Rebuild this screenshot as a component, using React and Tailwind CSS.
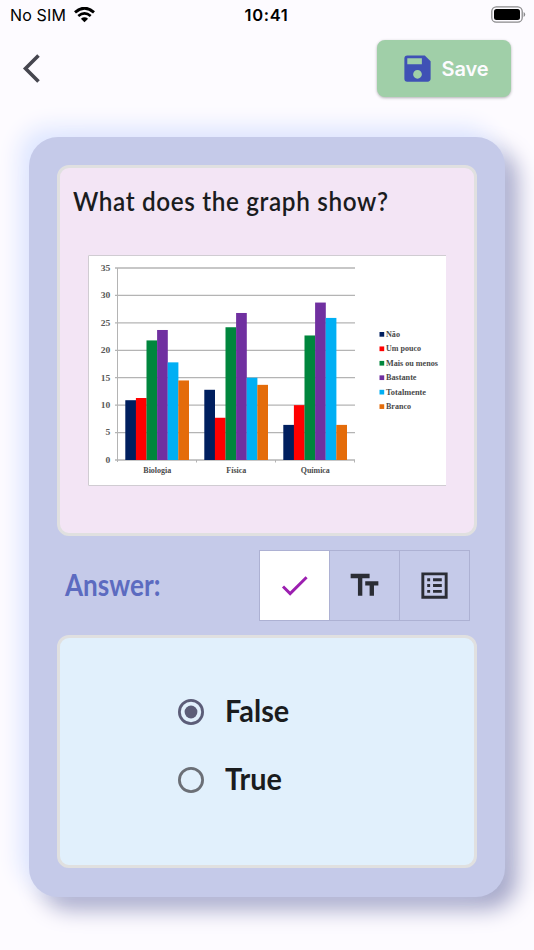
import React, { useState } from "react";
import { MdCheck, MdSave, MdTextFields } from "react-icons/md";

const SERIES = [
  { name: "Não", color: "#001f5f", values: [10.9, 12.8, 6.4], width: 14 },
  { name: "Um pouco", color: "#ff0000", values: [11.3, 7.7, 10], width: 35 },
  { name: "Mais ou menos", color: "#00863d", values: [21.8, 24.2, 22.7], width: 52 },
  { name: "Bastante", color: "#7030a0", values: [23.7, 26.8, 28.7], width: 30.5 },
  { name: "Totalmente", color: "#00aff4", values: [17.8, 15, 25.9], width: 40 },
  { name: "Branco", color: "#e46c0a", values: [14.5, 13.7, 6.4], width: 25 },
];

const SUBJECTS = [
  { name: "Biologia", width: 28 },
  { name: "Física", width: 20 },
  { name: "Química", width: 29 },
];

const BASE = 205;
const UNIT = 192 / 35;

const StatusBar = () => (
  <header className="grid h-[30px] grid-cols-3 items-center pr-2 pl-2.5 font-['Inter',sans-serif] text-black">
    <div className="flex items-center gap-2">
      <span className="text-[16px] tracking-[0.15px] whitespace-nowrap">No SIM</span>
      <svg width="21" height="16" viewBox="0 0 21 16" fill="none" stroke="black">
        <path d="M1 5.3Q10.5-2.9 20 5.3" strokeWidth="2.9" />
        <path d="M4.3 9Q10.5 3.7 16.7 9" strokeWidth="2.7" />
        <path d="M10.5 15.3 6.9 11.8Q10.5 8.9 14.1 11.8Z" fill="black" stroke="none" />
      </svg>
    </div>
    <span className="pr-[3px] text-center text-[16.5px] font-semibold tracking-[0.7px]">10:41</span>
    <svg className="-mt-0.5 justify-self-end" width="35" height="17" viewBox="0 0 35 17">
      <rect x="0.8" y="0.8" width="30.4" height="15.4" rx="4.5" fill="none" stroke="#8a8a8c" strokeWidth="1.3" />
      <rect x="3" y="3" width="26" height="11" rx="2.5" fill="black" />
      <path d="M32.6 6v5q1.6-.8 1.6-2.5T32.6 6Z" fill="#8a8a8c" />
    </svg>
  </header>
);

const Chart = () => (
  <svg
    width="358"
    height="231"
    viewBox="0 0 358 231"
    className="mx-auto bg-white font-['Liberation_Serif',serif] font-bold"
  >
    <path d="M358 .5H.5v230H358" fill="none" stroke="#d0ccd2" />
    {[0, 5, 10, 15, 20, 25, 30, 35].map((tick) => {
      const y = BASE - tick * UNIT;
      return (
        <g key={tick}>
          <path d={`M27 ${y}H267`} stroke="#b4b4b4" strokeWidth="1.3" />
          <text
            x={tick > 9 ? 12.8 : 17.6}
            y={y + 2.8}
            fontSize="8"
            textLength={tick > 9 ? 9.6 : 4.8}
            lengthAdjust="spacingAndGlyphs"
            fill="#5a5a5a"
          >
            {tick}
          </text>
        </g>
      );
    })}
    <path d="M29.5 13V207M108.5 205v2.5M187.5 205v2.5M266.5 205v2.5" stroke="#b4b4b4" />
    {SUBJECTS.map((subject, i) => (
      <g key={subject.name}>
        {SERIES.map((s, j) => (
          <rect
            key={s.name}
            x={37.3 + i * 79 + j * 10.6}
            y={BASE - s.values[i] * UNIT}
            width="10.7"
            height={s.values[i] * UNIT}
            fill={s.color}
          />
        ))}
        <text
          x={69.3 - subject.width / 2 + i * 79}
          y="218"
          fontSize="8"
          textLength={subject.width}
          lengthAdjust="spacingAndGlyphs"
          fill="#4a4a4a"
        >
          {subject.name}
        </text>
      </g>
    ))}
    {SERIES.map((s, i) => (
      <g key={s.name}>
        <rect x="291.5" y={77 + i * 14.45} width="4.7" height="4.7" fill={s.color} />
        <text
          x="298"
          y={82 + i * 14.45}
          fontSize="8"
          textLength={s.width}
          lengthAdjust="spacingAndGlyphs"
          fill="#4a4a4a"
        >
          {s.name}
        </text>
      </g>
    ))}
  </svg>
);

const ListIcon = () => (
  <svg width="35" height="35" viewBox="0 0 24 24" fill="#2b2d35">
    <path
      fillRule="evenodd"
      d="M3 3h18v18H3zM5 5v14h14V5zM11 7h6v2h-6zM11 11h6v2h-6zM11 15h6v2h-6zM7 7h2v2H7zM7 11h2v2H7zM7 15h2v2H7z"
    />
  </svg>
);

const ANSWER_TYPES = [
  { id: "boolean", label: "True or false", icon: <MdCheck size={35} color="#9c1fb0" /> },
  { id: "text", label: "Text", icon: <MdTextFields size={35} color="#2b2d35" /> },
  { id: "list", label: "List", icon: <ListIcon /> },
];

const Radio = ({ label, checked, onSelect }) => (
  <button
    type="button"
    role="radio"
    aria-checked={checked}
    onClick={onSelect}
    className="flex h-[68px] items-center gap-[21px]"
  >
    <svg width="26" height="26" viewBox="0 0 26 26">
      <circle cx="13" cy="13" r="11.6" fill="none" strokeWidth="2.8" stroke={checked ? "#5c5d78" : "#6b6f76"} />
      {checked && <circle cx="13" cy="13" r="6.4" fill="#5c5d78" />}
    </svg>
    <span className="mb-[3px] inline-block origin-left scale-x-[0.93] font-['Lato',sans-serif] text-[31px] leading-none font-bold text-[#1a1c1e]">
      {label}
    </span>
  </button>
);

const App = () => {
  const [answerType, setAnswerType] = useState("boolean");
  const [answer, setAnswer] = useState("False");

  return (
    <div className="h-[950px] w-[534px] overflow-hidden bg-[#fdfbff]">
      <StatusBar />

      <nav className="flex items-start justify-between pt-2.5 pr-[23px] pl-[22px]">
        <button type="button" aria-label="Back" className="mt-[13px]">
          <svg width="20" height="31" viewBox="0 0 20 31" fill="none" stroke="#46464f" strokeWidth="3.6">
            <path d="M16.5 2.5 3.5 15.500 16.5 28.500" />
          </svg>
        </button>
        <button
          type="button"
          className="flex h-[57px] w-[134px] items-center justify-center gap-[7px] rounded-lg bg-[#a0cfa8] font-['Inter',sans-serif] text-[20px] font-semibold tracking-[-0.1px] text-[#fdfbff] shadow-[0_1px_3px_rgba(0,0,0,0.3)]"
        >
          <MdSave size={35} color="#3f51b5" />
          Save
        </button>
      </nav>

      <main className="mt-10 ml-[29px] flex h-[760px] w-[476px] flex-col rounded-[29px] bg-[#c5cae9] px-7 pt-[28px] shadow-[-10px_-10px_22px_#dfe7ff,12px_12px_22px_#a3a5c8]">
        <section className="flex h-[371px] shrink-0 flex-col rounded-xl border-[3px] border-[#e0e0e0] bg-[#f3e5f5]">
          <h1 className="ml-[13px] h-[87px] origin-left scale-x-[0.9] pt-4 font-['Lato',sans-serif] text-[27px] leading-[34px] font-semibold tracking-[0.7px] whitespace-nowrap text-[#1a1c1e]">
            What does the graph show?
          </h1>
          <Chart />
        </section>

        <div className="flex h-[99px] shrink-0 items-center justify-between pr-[7px] pl-2">
          <h2 className="mb-1 origin-left scale-x-[0.87] font-['Lato',sans-serif] text-[30px] leading-none font-bold text-[#5c6bc0]">
            Answer:
          </h2>
          <div className="flex h-[71px] w-[211px] divide-x divide-[#adb1d3] border border-[#adb1d3]">
            {ANSWER_TYPES.map((type) => (
              <button
                key={type.id}
                type="button"
                aria-label={type.label}
                onClick={() => setAnswerType(type.id)}
                className={`flex flex-1 items-center justify-center ${
                  answerType === type.id ? "bg-white" : ""
                }`}
              >
                {type.icon}
              </button>
            ))}
          </div>
        </div>

        <section
          role="radiogroup"
          className="flex h-[233px] shrink-0 flex-col items-start rounded-xl border-[3px] border-[#e0e0e0] bg-[#e1f0fc] pt-10 pl-[118px]"
        >
          {["False", "True"].map((label) => (
            <Radio key={label} label={label} checked={answer === label} onSelect={() => setAnswer(label)} />
          ))}
        </section>
      </main>
    </div>
  );
};

export default App;
